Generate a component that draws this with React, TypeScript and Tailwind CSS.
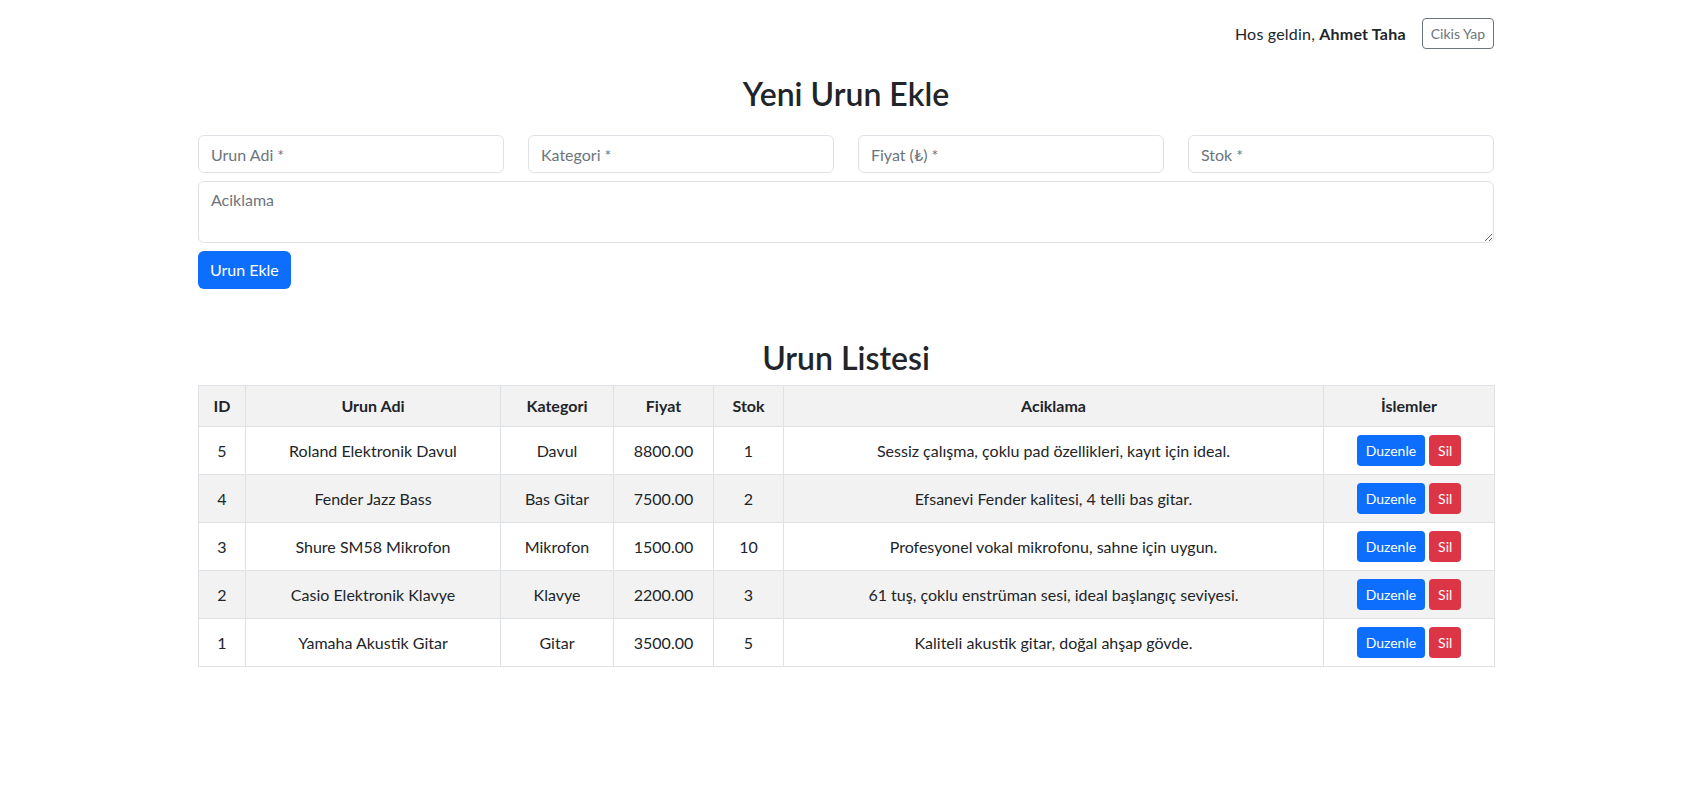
import React from "react";

const rows = [
  { id: 5, name: "Roland Elektronik Davul", cat: "Davul", price: "8800.00", stock: 1, desc: "Sessiz çalışma, çoklu pad özellikleri, kayıt için ideal." },
  { id: 4, name: "Fender Jazz Bass", cat: "Bas Gitar", price: "7500.00", stock: 2, desc: "Efsanevi Fender kalitesi, 4 telli bas gitar." },
  { id: 3, name: "Shure SM58 Mikrofon", cat: "Mikrofon", price: "1500.00", stock: 10, desc: "Profesyonel vokal mikrofonu, sahne için uygun." },
  { id: 2, name: "Casio Elektronik Klavye", cat: "Klavye", price: "2200.00", stock: 3, desc: "61 tuş, çoklu enstrüman sesi, ideal başlangıç seviyesi." },
  { id: 1, name: "Yamaha Akustik Gitar", cat: "Gitar", price: "3500.00", stock: 5, desc: "Kaliteli akustik gitar, doğal ahşap gövde." },
];

const inputCls =
  "h-[38px] w-full rounded-[6px] border border-[#dee2e6] bg-white px-3 py-[6px] text-[16px] leading-6 text-[#212529] placeholder:text-[#6c757d] outline-none";

export default function App() {
  return (
    <div className="min-h-[804px] bg-white text-[16px] leading-6 text-[#212529] [font-family:Lato,sans-serif]">
      <div className="mx-auto w-[1296px]">
        <div className="flex items-center justify-end pt-[18px]">
          <span className="tracking-[0.2px]">
            Hos geldin, <b className="font-bold">Ahmet Taha</b>
          </span>
          <button className="ml-4 h-[31px] rounded-[4px] border border-[#6c757d] px-2 text-[14px] leading-[21px] text-[#6c757d]">
            Cikis Yap
          </button>
        </div>

        <h2 className="mt-[26px] text-center text-[32px] font-semibold leading-[38px]">Yeni Urun Ekle</h2>

        <div className="mt-[22px] grid grid-cols-4 gap-6">
          <input className={inputCls} placeholder="Urun Adi *" />
          <input className={inputCls} placeholder="Kategori *" />
          <input className={inputCls} placeholder="Fiyat (₺) *" />
          <input className={inputCls} placeholder="Stok *" />
        </div>
        <textarea
          className="mt-2 block h-[62px] w-full rounded-[6px] border border-[#dee2e6] bg-white px-3 py-[6px] text-[16px] leading-6 placeholder:text-[#6c757d] outline-none"
          placeholder="Aciklama"
        />
        <button className="mt-2 h-[38px] rounded-[6px] bg-[#0d6efd] px-3 text-white">Urun Ekle</button>

        <h2 className="mt-[50px] text-center text-[32px] font-semibold leading-[38px]">Urun Listesi</h2>

        <table className="mt-2 w-full table-fixed border-collapse text-center">
          <colgroup>
            <col className="w-[47px]" />
            <col className="w-[255px]" />
            <col className="w-[113px]" />
            <col className="w-[100px]" />
            <col className="w-[70px]" />
            <col className="w-[540px]" />
            <col className="w-[171px]" />
          </colgroup>
          <thead>
            <tr className="bg-[#f2f2f2]">
              {["ID", "Urun Adi", "Kategori", "Fiyat", "Stok", "Aciklama", "İslemler"].map((h) => (
                <th key={h} className="border border-[#dee2e6] px-2 py-2 font-bold">
                  {h}
                </th>
              ))}
            </tr>
          </thead>
          <tbody>
            {rows.map((r, i) => (
              <tr key={r.id} className={i % 2 === 1 ? "bg-[#f2f2f2]" : "bg-white"}>
                <td className="border border-[#dee2e6] p-2 align-middle">{r.id}</td>
                <td className="border border-[#dee2e6] p-2 align-middle">{r.name}</td>
                <td className="border border-[#dee2e6] p-2 align-middle">{r.cat}</td>
                <td className="border border-[#dee2e6] p-2 align-middle">{r.price}</td>
                <td className="border border-[#dee2e6] p-2 align-middle">{r.stock}</td>
                <td className="border border-[#dee2e6] p-2 align-middle">{r.desc}</td>
                <td className="border border-[#dee2e6] p-2 align-middle">
                  <div className="flex justify-center gap-1">
                    <button className="h-[31px] rounded-[4px] bg-[#0d6efd] px-[9px] text-[14px] leading-[21px] text-white">Duzenle</button>
                    <button className="h-[31px] rounded-[4px] bg-[#dc3545] px-[9px] text-[14px] leading-[21px] text-white">Sil</button>
                  </div>
                </td>
              </tr>
            ))}
          </tbody>
        </table>
      </div>
    </div>
  );
}
